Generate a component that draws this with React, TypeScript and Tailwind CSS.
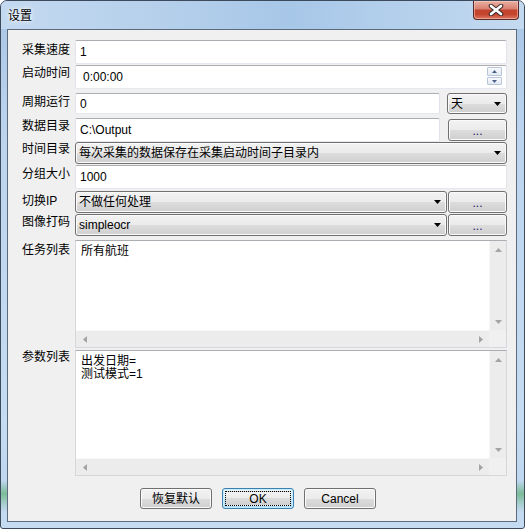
import React from "react";

function DownTri({ className = "" }: { className?: string }) {
  return (
    <svg width="7" height="4" viewBox="0 0 7 4" className={className}>
      <path d="M0 0H7L3.5 4Z" fill="#000" />
    </svg>
  );
}

function ArrowIcon({ dir, color }: { dir: "up" | "down" | "left" | "right"; color: string }) {
  const d =
    dir === "up"
      ? "M0 4L3.5 0L7 4Z"
      : dir === "down"
      ? "M0 0H7L3.5 4Z"
      : dir === "left"
      ? "M4 0V7L0 3.5Z"
      : "M0 0V7L4 3.5Z";
  const vertical = dir === "up" || dir === "down";
  return (
    <svg width={vertical ? 7 : 4} height={vertical ? 4 : 7} viewBox={vertical ? "0 0 7 4" : "0 0 4 7"}>
      <path d={d} fill={color} />
    </svg>
  );
}

function TextBox({ className = "", children }: { className?: string; children?: React.ReactNode }) {
  return (
    <div
      className={`bg-white border border-[#e2e3ea] border-t-[#abadb3] border-b-[#e3e9ef] rounded-[2px] flex items-center ${className}`}
    >
      {children}
    </div>
  );
}

function Combo({ text, className = "" }: { text: string; className?: string }) {
  return (
    <div
      className={`rounded-[3px] border border-[#707070] bg-[linear-gradient(#f2f2f2_0%,#ebebeb_50%,#dddddd_50%,#cfcfcf_100%)] shadow-[inset_0_0_0_1px_#fbfbfb] flex items-center pl-[3px] pr-[5px] ${className}`}
    >
      <span className="flex-1 truncate leading-[14px]">{text}</span>
      <DownTri />
    </div>
  );
}

function Btn({ children, className = "" }: { children: React.ReactNode; className?: string }) {
  return (
    <div
      className={`rounded-[3px] border border-[#707070] bg-[linear-gradient(#f2f2f2_0%,#ebebeb_50%,#dddddd_50%,#cfcfcf_100%)] shadow-[inset_0_0_0_1px_#fbfbfb] flex items-center justify-center ${className}`}
    >
      {children}
    </div>
  );
}

function Label({ text, pt }: { text: string; pt: string }) {
  return <div className={`w-[53px] shrink-0 leading-[12px] whitespace-nowrap ${pt}`}>{text}</div>;
}

function ScrollArea({ lines }: { lines: string[] }) {
  return (
    <div className="flex-1 flex flex-col bg-white border border-[#d5d7dc] border-t-[#abadb3]">
      <div className="flex flex-1 min-h-0">
        <div className="flex-1 pl-[5px] pt-[4px] leading-[13px]">
          {lines.map((l, i) => (
            <div key={i}>{l}</div>
          ))}
        </div>
        <div className="w-[17px] flex flex-col bg-[#ececec] border-l border-[#f7f7f7]">
          <div className="h-[17px] flex items-center justify-center">
            <ArrowIcon dir="up" color="#a3a3a3" />
          </div>
          <div className="flex-1" />
          <div className="h-[17px] flex items-center justify-center">
            <ArrowIcon dir="down" color="#a3a3a3" />
          </div>
        </div>
      </div>
      <div className="flex h-[17px]">
        <div className="flex-1 flex bg-[#ececec] border-t border-[#f7f7f7]">
          <div className="w-[17px] flex items-center justify-center">
            <ArrowIcon dir="left" color="#a3a3a3" />
          </div>
          <div className="flex-1" />
          <div className="w-[17px] flex items-center justify-center">
            <ArrowIcon dir="right" color="#a3a3a3" />
          </div>
        </div>
        <div className="w-[17px] bg-[#f0f0f0]" />
      </div>
    </div>
  );
}

export default function App() {
  return (
    <div className="w-[525px] h-[529px] flex flex-col border border-[#3c4a5b] rounded-t-[7px] rounded-b-[3px] overflow-hidden bg-[linear-gradient(180deg,#a8c5e5_0%,#bcd4ee_25%,#c6dcf2_80%,#bfd7ef_91%,#7bbb97_93.5%,#a9cfd0_95.5%,#c4daf1_97%,#c5dbf2_100%)] font-['Liberation_Sans','Noto_Sans_CJK_SC',sans-serif] text-[12px] text-black">
      {/* Title bar */}
      <div className="h-[28px] shrink-0 flex justify-between bg-[linear-gradient(90deg,#c3d9f0_0%,#b6d0eb_30%,#a7c7e8_55%,#b6d1ec_80%,#c4daf0_100%)]">
        <div className="pl-[7px] pt-[8px] leading-[14px] [text-shadow:0_0_6px_#ffffff,0_0_3px_#ffffff]">设置</div>
        <div className="mr-[5px] w-[46px] h-[19px] rounded-b-[4px] border border-t-0 border-[#5a2a26] bg-[linear-gradient(180deg,#eab0a3_0%,#da8373_42%,#c4432d_52%,#c5452f_75%,#dd7a63_100%)] shadow-[inset_0_0_0_1px_rgba(255,220,210,0.45)] flex items-center justify-center">
          <svg width="16" height="12" viewBox="0 0 16 12">
            <path d="M3 2L13 10M13 2L3 10" stroke="#3b2a2a" strokeWidth="4.6" strokeLinecap="round" />
            <path d="M3 2L13 10M13 2L3 10" stroke="#ffffff" strokeWidth="2.6" strokeLinecap="round" />
          </svg>
        </div>
      </div>

      {/* Client area */}
      <div className="ml-[6px] mr-[7px] mb-[6px] flex-1 flex flex-col border border-[#5b6b7d] bg-[#f0f0f0] pl-[14px] pr-[9px]">
        {/* 采集速度 */}
        <div className="flex mt-[10px] h-[24px]">
          <Label text="采集速度" pt="pt-[4px]" />
          <TextBox className="flex-1 pl-[4px]">1</TextBox>
        </div>

        {/* 启动时间 */}
        <div className="flex mt-[1px] h-[24px]">
          <Label text="启动时间" pt="pt-[2px]" />
          <TextBox className="flex-1 pl-[7px] items-start">
            <span className="flex-1 self-center">0:00:00</span>
            <div className="flex flex-col gap-[1px] mr-[4px] mt-[1px]">
              <div className="w-[15px] h-[9px] rounded-[1px] border border-[#b9c6d8] bg-[linear-gradient(#f8fafc,#e2e9f2)] flex items-center justify-center">
                <svg width="5" height="3" viewBox="0 0 5 3">
                  <path d="M0 3L2.5 0L5 3Z" fill="#4a5f86" />
                </svg>
              </div>
              <div className="w-[15px] h-[8px] rounded-[1px] border border-[#b9c6d8] bg-[linear-gradient(#f8fafc,#e2e9f2)] flex items-center justify-center">
                <svg width="5" height="3" viewBox="0 0 5 3">
                  <path d="M0 0H5L2.5 3Z" fill="#4a5f86" />
                </svg>
              </div>
            </div>
          </TextBox>
        </div>

        {/* 周期运行 */}
        <div className="flex mt-[4px] h-[21px]">
          <Label text="周期运行" pt="pt-[3px]" />
          <TextBox className="w-[365px] pl-[4px]">0</TextBox>
          <Combo text="天" className="ml-[7px] flex-1" />
        </div>

        {/* 数据目录 */}
        <div className="flex mt-[4px] h-[24px]">
          <Label text="数据目录" pt="pt-[2px]" />
          <TextBox className="w-[365px] pl-[4px]">C:\Output</TextBox>
          <Btn className="ml-[8px] flex-1 mt-[1px] mb-[1px]">
            <span className="text-[#202070] leading-[12px] pt-[2px]">...</span>
          </Btn>
        </div>

        {/* 时间目录 */}
        <div className="flex mt-[0px] h-[22px]">
          <Label text="时间目录" pt="pt-[1px]" />
          <Combo text="每次采集的数据保存在采集启动时间子目录内" className="flex-1" />
        </div>

        {/* 分组大小 */}
        <div className="flex mt-[1px] h-[24px]">
          <Label text="分组大小" pt="pt-[3px]" />
          <TextBox className="flex-1 pl-[4px]">1000</TextBox>
        </div>

        {/* 切换IP */}
        <div className="flex mt-[2px] h-[22px]">
          <Label text="切换IP" pt="pt-[4px]" />
          <Combo text="不做任何处理" className="w-[372px]" />
          <Btn className="ml-[1px] flex-1">
            <span className="text-[#202070] leading-[12px] pt-[2px]">...</span>
          </Btn>
        </div>

        {/* 图像打码 */}
        <div className="flex mt-[1px] h-[22px]">
          <Label text="图像打码" pt="pt-[2px]" />
          <Combo text="simpleocr" className="w-[372px]" />
          <Btn className="ml-[1px] flex-1">
            <span className="text-[#202070] leading-[12px] pt-[2px]">...</span>
          </Btn>
        </div>

        {/* 任务列表 */}
        <div className="flex mt-[4px] h-[108px]">
          <Label text="任务列表" pt="pt-[4px]" />
          <ScrollArea lines={["所有航班"]} />
        </div>

        {/* 参数列表 */}
        <div className="flex mt-[2px] h-[126px]">
          <Label text="参数列表" pt="pt-[1px]" />
          <ScrollArea lines={["出发日期=", "测试模式=1"]} />
        </div>

        {/* Buttons */}
        <div className="flex mt-[12px] h-[21px] pl-[118px] gap-[10px]">
          <Btn className="w-[72px]">恢复默认</Btn>
          <div className="w-[72px] rounded-[3px] border border-[#3c7fb1] bg-[linear-gradient(#eaf6fd_0%,#d9f0fc_50%,#bee6fd_50%,#a7d9f5_100%)] shadow-[inset_0_0_0_1px_#c8ecfd] flex p-[2px]">
            <div className="flex-1 border border-dotted border-black flex items-center justify-center bg-[linear-gradient(#f2f2f2_0%,#ebebeb_50%,#dddddd_50%,#cfcfcf_100%)]">
              OK
            </div>
          </div>
          <Btn className="w-[72px]">Cancel</Btn>
        </div>
      </div>
    </div>
  );
}
